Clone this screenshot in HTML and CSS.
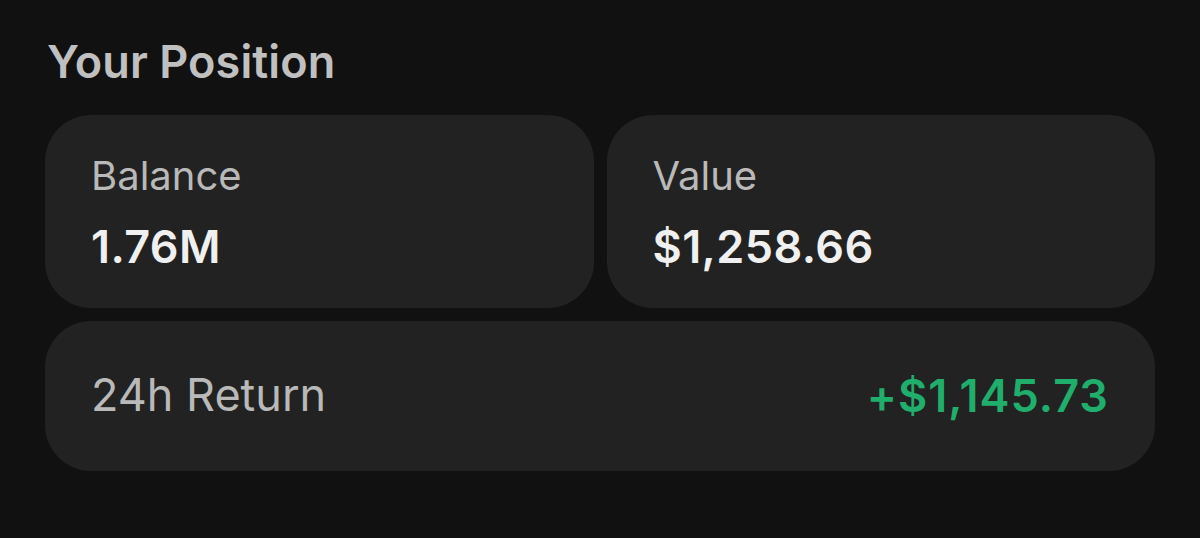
FILE: index.html
```html
<!DOCTYPE html>
<html>
<head>
<meta charset="utf-8">
<link rel="stylesheet" href="styles.css">
</head>
<body>
<div class="page">
  <h1 class="title">Your Position</h1>
  <div class="grid">
    <div class="card stat">
      <div class="label">Balance</div>
      <div class="value">1.76M</div>
    </div>
    <div class="card stat">
      <div class="label">Value</div>
      <div class="value">$1,258.66</div>
    </div>
    <div class="card row">
      <div class="label big">24h Return</div>
      <div class="gain">+$1,145.73</div>
    </div>
  </div>
</div>
</body>
</html>
```

FILE: styles.css
```css
html, body {
  margin: 0;
  padding: 0;
  background: #111111;
  height: 100%;
}
body {
  font-family: Inter, "Noto Sans", sans-serif;
}
.page {
  padding: 31px 45px 0 45px;
}
.title {
  margin: 0 0 0 2px;
  font-size: 45px;
  line-height: 62px;
  font-weight: 600;
  color: #c0c0c0;
  letter-spacing: 0.1px;
}
.grid {
  margin-top: 22px;
  display: grid;
  grid-template-columns: 1fr 1fr;
  gap: 13px 13px;
}
.card {
  background: #222222;
  border-radius: 46px;
  box-sizing: border-box;
}
.stat {
  height: 193px;
  padding: 2px 46px 0;
  display: flex;
  flex-direction: column;
  justify-content: center;
}
.row {
  grid-column: 1 / 3;
  height: 150px;
  padding: 0 46px 2px;
  display: flex;
  align-items: center;
  justify-content: space-between;
}
.label {
  font-size: 40px;
  line-height: 46px;
  color: #b9b9b9;
  font-weight: 400;
}
.value {
  margin-top: 23px;
  font-size: 45px;
  line-height: 50px;
  color: #f0f0f0;
  font-weight: 600;
  letter-spacing: 0.4px;
}
.label.big {
  font-size: 45px;
}
.gain {
  font-size: 45px;
  color: #1fae6c;
  font-weight: 600;
  letter-spacing: 1px;
}
```
